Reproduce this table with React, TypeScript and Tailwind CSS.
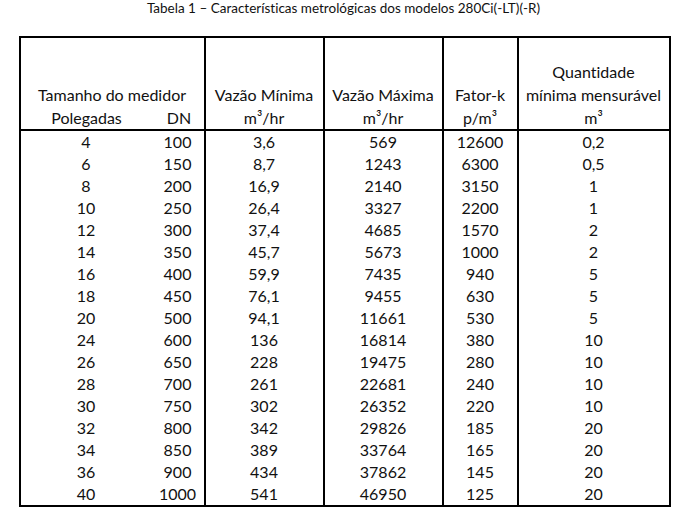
const rows: [string, string, string, string, string, string][] = [
  ['4', '100', '3,6', '569', '12600', '0,2'],
  ['6', '150', '8,7', '1243', '6300', '0,5'],
  ['8', '200', '16,9', '2140', '3150', '1'],
  ['10', '250', '26,4', '3327', '2200', '1'],
  ['12', '300', '37,4', '4685', '1570', '2'],
  ['14', '350', '45,7', '5673', '1000', '2'],
  ['16', '400', '59,9', '7435', '940', '5'],
  ['18', '450', '76,1', '9455', '630', '5'],
  ['20', '500', '94,1', '11661', '530', '5'],
  ['24', '600', '136', '16814', '380', '10'],
  ['26', '650', '228', '19475', '280', '10'],
  ['28', '700', '261', '22681', '240', '10'],
  ['30', '750', '302', '26352', '220', '10'],
  ['32', '800', '342', '29826', '185', '20'],
  ['34', '850', '389', '33764', '165', '20'],
  ['36', '900', '434', '37862', '145', '20'],
  ['40', '1000', '541', '46950', '125', '20'],
]

export default function App() {
  return (
    <div className="w-[687px] h-[525px] bg-white text-[#111] font-['Lato','Liberation_Sans',sans-serif] [font-variant-ligatures:none]">
      <p className="text-center text-[13.5px] leading-[16px]">
        Tabela 1 – Características metrológicas dos modelos 280Ci(-LT)(-R)
      </p>
      <div className="mt-[20px] mx-auto w-[650px]">
        <table className="w-full table-fixed border-collapse border-2 border-black text-[16px]">
          <colgroup>
            <col className="w-[132px]" />
            <col className="w-[53px]" />
            <col className="w-[119px]" />
            <col className="w-[119px]" />
            <col className="w-[75px]" />
            <col className="w-[152px]" />
          </colgroup>
          <thead>
            <tr className="h-[93px] border-b-2 border-black">
              <th colSpan={2} className="align-bottom font-normal p-0 leading-[23px]">
                <div>Tamanho do medidor</div>
                <div className="grid grid-cols-[132px_53px]">
                  <span>Polegadas</span>
                  <span>DN</span>
                </div>
              </th>
              <th className="align-bottom font-normal p-0 leading-[23px] border-l-2 border-black">
                <div>Vazão Mínima</div>
                <div>m³/hr</div>
              </th>
              <th className="align-bottom font-normal p-0 leading-[23px] border-l-2 border-black">
                <div>Vazão Máxima</div>
                <div>m³/hr</div>
              </th>
              <th className="align-bottom font-normal p-0 leading-[23px] border-l-2 border-black">
                <div>Fator-k</div>
                <div>p/m³</div>
              </th>
              <th className="align-bottom font-normal p-0 leading-[23px] border-l-2 border-black">
                <div>Quantidade</div>
                <div>mínima mensurável</div>
                <div>m³</div>
              </th>
            </tr>
          </thead>
          <tbody>
            {rows.map((r) => (
              <tr key={r[0]} className="h-[22px] leading-[22px]">
                <td className="p-0 text-center">{r[0]}</td>
                <td className="p-0 text-center">{r[1]}</td>
                <td className="p-0 text-center border-l-2 border-black">{r[2]}</td>
                <td className="p-0 text-center border-l-2 border-black">{r[3]}</td>
                <td className="p-0 text-center border-l-2 border-black">{r[4]}</td>
                <td className="p-0 text-center border-l-2 border-black">{r[5]}</td>
              </tr>
            ))}
          </tbody>
        </table>
      </div>
    </div>
  )
}
